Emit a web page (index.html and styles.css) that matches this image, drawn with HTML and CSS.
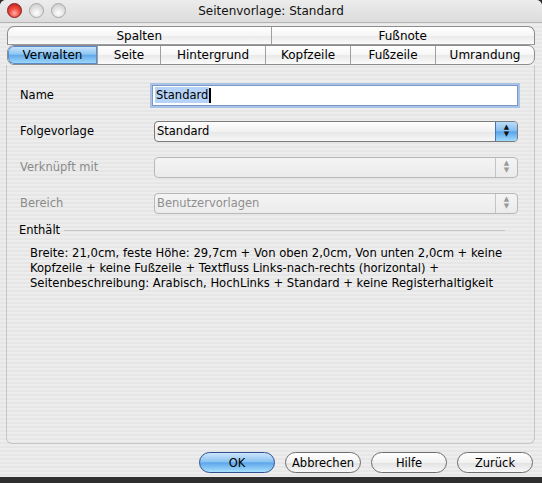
FILE: index.html
```html
<!DOCTYPE html>
<html lang="de">
<head>
  <meta charset="UTF-8" />
  <title>Seitenvorlage: Standard</title>
  <link rel="stylesheet" href="styles.css">
</head>
<body>

  <div class="window">
    <div class="titlebar">
      <div class="lights">
        <span class="light close"></span>
        <span class="light"></span>
        <span class="light"></span>
      </div>
      <div class="title">Seitenvorlage: Standard</div>
    </div>

    <div class="tabs">
      <div class="seg-row top">
        <div class="seg">Spalten</div>
        <div class="seg">Fußnote</div>
      </div>
      <div class="seg-row">
        <div class="seg active w-verwalten">Verwalten</div>
        <div class="seg w-seite">Seite</div>
        <div class="seg w-hinter">Hintergrund</div>
        <div class="seg w-kopf">Kopfzeile</div>
        <div class="seg w-fuss">Fußzeile</div>
        <div class="seg w-umr">Umrandung</div>
      </div>
    </div>

    <div class="panel">
      <div class="row">
        <label class="label">Name</label>
        <div class="textfield"><span class="sel">Standard</span><span class="caret"></span></div>
      </div>
      <div class="row">
        <label class="label">Folgevorlage</label>
        <div class="popup">
          <span class="popup-text">Standard</span>
          <span class="arrows blue"><i>&#9650;</i><i>&#9660;</i></span>
        </div>
      </div>
      <div class="row">
        <label class="label off">Verknüpft mit</label>
        <div class="popup disabled">
          <span class="popup-text"></span>
          <span class="arrows"><i>&#9650;</i><i>&#9660;</i></span>
        </div>
      </div>
      <div class="row">
        <label class="label off">Bereich</label>
        <div class="popup disabled">
          <span class="popup-text">Benutzervorlagen</span>
          <span class="arrows"><i>&#9650;</i><i>&#9660;</i></span>
        </div>
      </div>

      <div class="group">
        <span class="group-title">Enthält</span>
        <span class="group-line"></span>
      </div>
      <p class="summary">
        Breite: 21,0cm, feste Höhe: 29,7cm + Von oben 2,0cm, Von unten 2,0cm + keine<br>
        Kopfzeile + keine Fußzeile + Textfluss Links-nach-rechts (horizontal) +<br>
        Seitenbeschreibung: Arabisch, HochLinks + Standard + keine Registerhaltigkeit
      </p>
    </div>

    <div class="buttons">
      <button class="btn default">OK</button>
      <button class="btn">Abbrechen</button>
      <button class="btn">Hilfe</button>
      <button class="btn">Zurück</button>
    </div>
  </div>

</body>
</html>
```

FILE: styles.css
```css
body {
  margin: 0;
  width: 542px;
  height: 483px;
  overflow: hidden;
  background: #2e2e2e;
  font-family: "DejaVu Sans", "Liberation Sans", sans-serif;
  font-size: 11.5px;
  color: #000;
}

.window {
  height: 477px;
  border-radius: 6px 6px 0 0;
  background: repeating-linear-gradient(to bottom, #ededed 0, #ededed 2px, #e6e6e6 2px, #e6e6e6 4px);
  display: flex;
  flex-direction: column;
}

/* title bar */
.titlebar {
  height: 22px;
  position: relative;
  display: flex;
  align-items: center;
  justify-content: center;
  border-bottom: 1px solid #b4b4b4;
  border-radius: 6px 6px 0 0;
  background: linear-gradient(to bottom, #ececec, #dcdcdc);
}

.title {
  font-size: 12px;
  color: #111;
}

.lights {
  position: absolute;
  left: 7px;
  top: 3px;
  display: flex;
  gap: 7px;
}

.light {
  width: 13px;
  height: 13px;
  border-radius: 50%;
  border: 1px solid #a8a8a8;
  background: radial-gradient(circle at 50% 70%, #ffffff 0, #e4e4e4 45%, #c4c4c4 100%);
}

.light.close {
  border-color: #8a1a1a;
  background: radial-gradient(circle at 50% 70%, #ffb0a8 0, #ee4a3e 45%, #b31b12 100%);
}

/* segmented tabs */
.tabs {
  padding: 3px 7px 0 7px;
}

.seg-row {
  display: flex;
  height: 18px;
  border: 1px solid #8c8c8c;
  border-radius: 7px;
  overflow: hidden;
  background: linear-gradient(to bottom, #ffffff 0, #f6f6f6 50%, #e9e9e9 51%, #fbfbfb 100%);
}

.seg-row.top {
  border-bottom-color: #9a9a9a;
  border-radius: 7px 7px 0 0;
  height: 17px;
}

.seg {
  flex: 1;
  display: flex;
  align-items: center;
  justify-content: center;
  border-left: 1px solid #a0a0a0;
  font-size: 12px;
}

.seg:first-child {
  border-left: none;
}

.seg.active {
  border-radius: 6px 0 0 6px;
  background: linear-gradient(to bottom, #cfe6fb 0, #8ec6f3 45%, #63aaeb 52%, #a4ddfb 100%);
  box-shadow: inset 0 0 0 1px #5a8ccc;
}

.w-verwalten { flex: 0 0 89px; }
.w-seite { flex: 0 0 62px; }
.w-hinter { flex: 0 0 104px; }
.w-kopf { flex: 0 0 84px; }
.w-fuss { flex: 0 0 84px; }
.w-umr { flex: 1; }

/* content panel */
.panel {
  margin: 0 7px 0 6px;
  height: 379px;
  box-sizing: border-box;
  border: 1px solid #c6c6c6;
  border-top: none;
  border-radius: 0 0 6px 6px;
  padding: 19px 16px 0 13px;
}

.row {
  display: flex;
  align-items: center;
  height: 22px;
  margin-bottom: 14px;
}

.label {
  width: 131px;
  flex: none;
}

.label.off {
  color: #8a8a8a;
}

.textfield {
  width: 367px;
  height: 21px;
  margin-left: 1px;
  box-sizing: border-box;
  background: #fff;
  border: 1px solid #7c98c4;
  box-shadow: 0 0 0 2px #a9c3e6;
  display: flex;
  align-items: center;
  padding-left: 2px;
}

.sel {
  background: #b5d3f7;
  padding: 1px 1px;
}

.caret {
  width: 2px;
  height: 15px;
  background: #000;
}

.popup {
  margin-left: 3px;
  width: 364px;
  height: 21px;
  box-sizing: border-box;
  border: 1px solid #7a7a7a;
  border-radius: 4px;
  background: linear-gradient(to bottom, #fdfdfd 0, #f1f1f1 50%, #e6e6e6 51%, #f7f7f7 100%);
  display: flex;
  align-items: center;
  overflow: hidden;
}

.popup-text {
  flex: 1;
  padding-left: 2px;
}

.popup.disabled {
  border-color: #b8b8b8;
  background: linear-gradient(to bottom, #f4f4f4, #ebebeb);
  color: #8e8e8e;
}

.arrows {
  width: 21px;
  height: 100%;
  border-left: 1px solid #c4c4c4;
  display: flex;
  flex-direction: column;
  align-items: center;
  justify-content: center;
  color: #9a9a9a;
}

.arrows i {
  font-style: normal;
  font-size: 7px;
  line-height: 7px;
}

.arrows.blue {
  border-left: 1px solid #4a72b2;
  color: #111;
  background: linear-gradient(to bottom, #bcdcfa 0, #86bff1 45%, #5aa4ea 52%, #9fdafc 100%);
}

.group {
  display: flex;
  align-items: center;
  gap: 4px;
  margin-top: -5px;
  margin-left: -1px;
}

.group-line {
  flex: 1;
  height: 1px;
  background: #c4c4c4;
  margin-right: 13px;
}

.summary {
  margin: 9px 0 0 10px;
  line-height: 15px;
  font-size: 11.6px;
  white-space: nowrap;
}

/* bottom buttons */
.buttons {
  display: flex;
  justify-content: flex-end;
  gap: 10px;
  padding: 8px 9px 0 0;
}

.btn {
  width: 76px;
  height: 21px;
  border: 1px solid #6d6d6d;
  border-radius: 11px;
  font-family: inherit;
  font-size: 11.5px;
  background: linear-gradient(to bottom, #ffffff 0, #f2f2f2 50%, #e2e2e2 52%, #f8f8f8 100%);
  padding: 0;
}

.btn.default {
  border-color: #2f4f91;
  background: linear-gradient(to bottom, #cde5fb 0, #8cc4f2 45%, #5ea6eb 52%, #a6e0fc 100%);
}
```
